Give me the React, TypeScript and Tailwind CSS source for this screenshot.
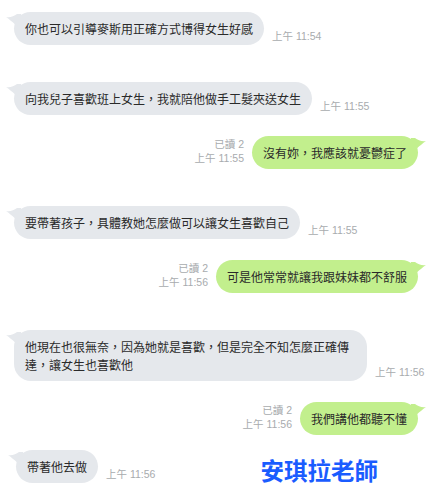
import React from 'react';

const cjk = { fontFamily: '"Noto Sans CJK TC", "Noto Sans", sans-serif' };
const meta = { fontFamily: '"Liberation Sans", "Noto Sans CJK TC", sans-serif' };

const LeftTail = () => (
  <svg className="absolute left-[-9px] top-[1px]" width="16" height="16" viewBox="0 0 16 16">
    <path d="M1 4 C5 5 9 3 12 1 L16 1 L16 14 C12 14 8 9 1 4 Z" fill="#e5e8ec" />
  </svg>
);

const RightTail = () => (
  <svg className="absolute right-[-9px] top-[1px]" width="16" height="16" viewBox="0 0 16 16">
    <path d="M15 4 C11 5 7 3 4 1 L0 1 L0 14 C4 14 8 9 15 4 Z" fill="#c2ef8d" />
  </svg>
);

const Incoming = ({ text, time, mt, maxW }: { text: string; time: string; mt: string; maxW?: string }) => (
  <div className={`flex items-end pl-[14px] ${mt}`}>
    <div
      className={`relative rounded-[17px] bg-[#e5e8ec] px-[11px] py-[7.5px] text-[12px] leading-[18px] text-[#2a2a2a] ${maxW ?? ''}`}
      style={cjk}
    >
      <LeftTail />
      <span className="relative">{text}</span>
    </div>
    <span className="mb-[3px] ml-2 shrink-0 text-[10.5px] leading-[12px] text-[#a8abae]" style={meta}>
      {time}
    </span>
  </div>
);

const Outgoing = ({ text, time, mt }: { text: string; time: string; mt: string }) => (
  <div className={`flex items-end justify-end pr-[17px] ${mt}`}>
    <div className="mb-[4px] mr-2 flex flex-col items-end text-[10.5px] leading-[14px] text-[#a8abae]" style={meta}>
      <span>已讀 2</span>
      <span>{time}</span>
    </div>
    <div
      className="relative rounded-[17px] bg-[#c2ef8d] px-[11px] py-[7.5px] text-[12px] leading-[18px] text-[#2a2a2a]"
      style={cjk}
    >
      <RightTail />
      <span className="relative">{text}</span>
    </div>
  </div>
);

export default function App() {
  return (
    <div className="h-[496px] w-[435px] overflow-hidden bg-white pt-[12px]">
      <Incoming text="你也可以引導麥斯用正確方式博得女生好感" time="上午 11:54" mt="" />
      <Incoming text="向我兒子喜歡班上女生，我就陪他做手工髮夾送女生" time="上午 11:55" mt="mt-[37px]" />
      <Outgoing text="沒有妳，我應該就憂鬱症了" time="上午 11:55" mt="mt-[21px]" />
      <Incoming text="要帶著孩子，具體教她怎麼做可以讓女生喜歡自己" time="上午 11:55" mt="mt-[37px]" />
      <Outgoing text="可是他常常就讓我跟妹妹都不舒服" time="上午 11:56" mt="mt-[21px]" />
      <Incoming
        text="他現在也很無奈，因為她就是喜歡，但是完全不知怎麼正確傳達，讓女生也喜歡他"
        time="上午 11:56"
        mt="mt-[37px]"
        maxW="max-w-[353px]"
      />
      <Outgoing text="我們講他都聽不懂" time="上午 11:56" mt="mt-[21px]" />
      <div className="mt-[15px] flex items-end pl-[16px]">
        <div
          className="relative rounded-[17px] bg-[#e5e8ec] px-[11px] py-[7.5px] text-[12px] leading-[18px] text-[#2a2a2a]"
          style={cjk}
        >
          <LeftTail />
          <span className="relative">帶著他去做</span>
        </div>
        <span className="mb-[3px] ml-2 shrink-0 text-[10.5px] leading-[12px] text-[#a8abae]" style={meta}>
          上午 11:56
        </span>
        <span className="mb-[-1px] ml-[105px] text-[23.5px] font-bold leading-[28px] text-[#1a5cff]" style={cjk}>
          安琪拉老師
        </span>
      </div>
    </div>
  );
}
